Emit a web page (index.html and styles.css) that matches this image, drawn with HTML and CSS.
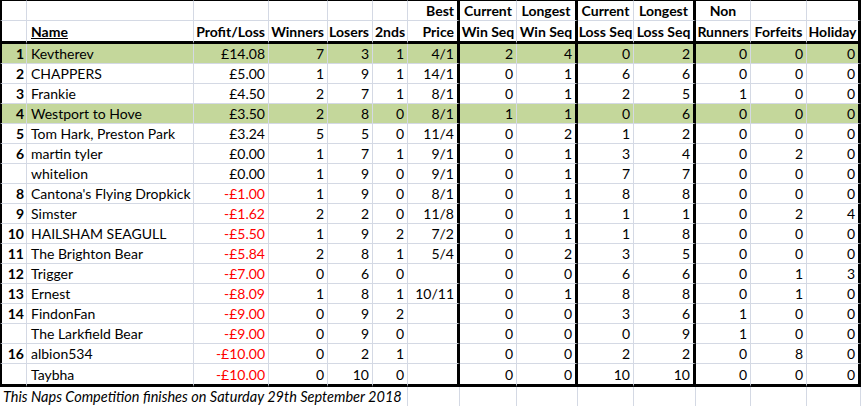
FILE: index.html
```html
<!DOCTYPE html>
<html>
<head>
<meta charset="utf-8">
<link rel="stylesheet" href="styles.css">
</head>
<body>
<div class="sheet">
  <div class="row h1"><span></span><span></span><span></span><span></span><span></span><span></span><span>Best</span><span class="c">Current</span><span class="c">Longest</span><span class="c">Current</span><span class="c">Longest</span><span class="c">Non</span><span></span><span></span></div>
  <div class="row h2"><span></span><span><u>Name</u></span><span>Profit/Loss</span><span>Winners</span><span>Losers</span><span class="c">2nds</span><span>Price</span><span class="c">Win Seq</span><span class="c">Win Seq</span><span class="c">Loss Seq</span><span class="c">Loss Seq</span><span class="c">Runners</span><span class="c">Forfeits</span><span class="c">Holiday</span></div>
  <div class="row g"><span>1</span><span>Kevtherev</span><span>£14.08</span><span>7</span><span>3</span><span>1</span><span>4/1</span><span>2</span><span>4</span><span>0</span><span>2</span><span>0</span><span>0</span><span>0</span></div>
  <div class="row"><span>2</span><span>CHAPPERS</span><span>£5.00</span><span>1</span><span>9</span><span>1</span><span>14/1</span><span>0</span><span>1</span><span>6</span><span>6</span><span>0</span><span>0</span><span>0</span></div>
  <div class="row"><span>3</span><span>Frankie</span><span>£4.50</span><span>2</span><span>7</span><span>1</span><span>8/1</span><span>0</span><span>1</span><span>2</span><span>5</span><span>1</span><span>0</span><span>0</span></div>
  <div class="row g"><span>4</span><span>Westport to Hove</span><span>£3.50</span><span>2</span><span>8</span><span>0</span><span>8/1</span><span>1</span><span>1</span><span>0</span><span>6</span><span>0</span><span>0</span><span>0</span></div>
  <div class="row"><span>5</span><span>Tom Hark, Preston Park</span><span>£3.24</span><span>5</span><span>5</span><span>0</span><span>11/4</span><span>0</span><span>2</span><span>1</span><span>2</span><span>0</span><span>0</span><span>0</span></div>
  <div class="row"><span>6</span><span>martin tyler</span><span>£0.00</span><span>1</span><span>7</span><span>1</span><span>9/1</span><span>0</span><span>1</span><span>3</span><span>4</span><span>0</span><span>2</span><span>0</span></div>
  <div class="row"><span></span><span>whitelion</span><span>£0.00</span><span>1</span><span>9</span><span>0</span><span>9/1</span><span>0</span><span>1</span><span>7</span><span>7</span><span>0</span><span>0</span><span>0</span></div>
  <div class="row"><span>8</span><span>Cantona's Flying Dropkick</span><span class="neg">-£1.00</span><span>1</span><span>9</span><span>0</span><span>8/1</span><span>0</span><span>1</span><span>8</span><span>8</span><span>0</span><span>0</span><span>0</span></div>
  <div class="row"><span>9</span><span>Simster</span><span class="neg">-£1.62</span><span>2</span><span>2</span><span>0</span><span>11/8</span><span>0</span><span>1</span><span>1</span><span>1</span><span>0</span><span>2</span><span>4</span></div>
  <div class="row"><span>10</span><span>HAILSHAM SEAGULL</span><span class="neg">-£5.50</span><span>1</span><span>9</span><span>2</span><span>7/2</span><span>0</span><span>1</span><span>1</span><span>8</span><span>0</span><span>0</span><span>0</span></div>
  <div class="row"><span>11</span><span>The Brighton Bear</span><span class="neg">-£5.84</span><span>2</span><span>8</span><span>1</span><span>5/4</span><span>0</span><span>2</span><span>3</span><span>5</span><span>0</span><span>0</span><span>0</span></div>
  <div class="row"><span>12</span><span>Trigger</span><span class="neg">-£7.00</span><span>0</span><span>6</span><span>0</span><span></span><span>0</span><span>0</span><span>6</span><span>6</span><span>0</span><span>1</span><span>3</span></div>
  <div class="row"><span>13</span><span>Ernest</span><span class="neg">-£8.09</span><span>1</span><span>8</span><span>1</span><span>10/11</span><span>0</span><span>1</span><span>8</span><span>8</span><span>0</span><span>1</span><span>0</span></div>
  <div class="row"><span>14</span><span>FindonFan</span><span class="neg">-£9.00</span><span>0</span><span>9</span><span>2</span><span></span><span>0</span><span>0</span><span>3</span><span>6</span><span>1</span><span>0</span><span>0</span></div>
  <div class="row"><span></span><span>The Larkfield Bear</span><span class="neg">-£9.00</span><span>0</span><span>9</span><span>0</span><span></span><span>0</span><span>0</span><span>0</span><span>9</span><span>1</span><span>0</span><span>0</span></div>
  <div class="row"><span>16</span><span>albion534</span><span class="neg">-£10.00</span><span>0</span><span>2</span><span>1</span><span></span><span>0</span><span>0</span><span>2</span><span>2</span><span>0</span><span>8</span><span>0</span></div>
  <div class="row last"><span></span><span>Taybha</span><span class="neg">-£10.00</span><span>0</span><span>10</span><span>0</span><span></span><span>0</span><span>0</span><span>10</span><span>10</span><span>0</span><span>0</span><span>0</span></div>
  <div class="row foot"><span class="note">This Naps Competition finishes on Saturday 29th September 2018</span><span></span><span></span><span></span><span></span><span></span><span></span><span></span><span></span></div>
</div>
</body>
</html>
```
FILE: styles.css
```css
body {
  margin: 0;
  background: #fff;
  color: #000;
  font-family: Lato, "Open Sans", sans-serif;
  font-size: 14px;
}

.sheet {
  width: 861px;
}

.row {
  display: grid;
  grid-template-columns: 27px 167px 75px 59px 45px 35px 52px 57px 61px 56px 62px 55px 56px 54px;
  height: 20px;
}

.row > span {
  box-sizing: border-box;
  display: flex;
  align-items: center;
  justify-content: flex-end;
  padding: 0 3px 0 2px;
  border-right: 1px solid #d4d9e4;
  border-bottom: 1px solid #d4d9e4;
  white-space: nowrap;
  overflow: hidden;
}

.row > span:nth-child(1) {
  border-left: 2px solid #000;
  font-weight: bold;
  padding-right: 2px;
}

.row > span:nth-child(2) {
  justify-content: flex-start;
  padding-left: 4px;
}

.row > span:nth-child(7),
.row > span:nth-child(9),
.row > span:nth-child(11),
.row > span:nth-child(14) {
  border-right: 3px solid #000;
}

.row > span.c {
  justify-content: center;
  padding: 0;
}

.h1, .h2 {
  font-weight: bold;
}

.h1 {
  height: 21px;
}

.h1 > span {
  border-top: 1px solid #000;
}

.h2 {
  height: 23px;
}

.h2 > span,
.last > span {
  border-bottom: 3px solid #000;
}

.last {
  height: 23px;
}

.g > span {
  background: #c4d79b;
}

.neg {
  color: #f00;
}

.row.foot > span:nth-child(n) {
  border-left: 0;
  border-right: 1px solid #d4d9e4;
  font-weight: normal;
}

.row.foot > span.note {
  grid-column: span 6;
  justify-content: flex-start;
  padding-left: 3px;
  font-size: 14.5px;
  font-style: italic;
  overflow: visible;
}
```
